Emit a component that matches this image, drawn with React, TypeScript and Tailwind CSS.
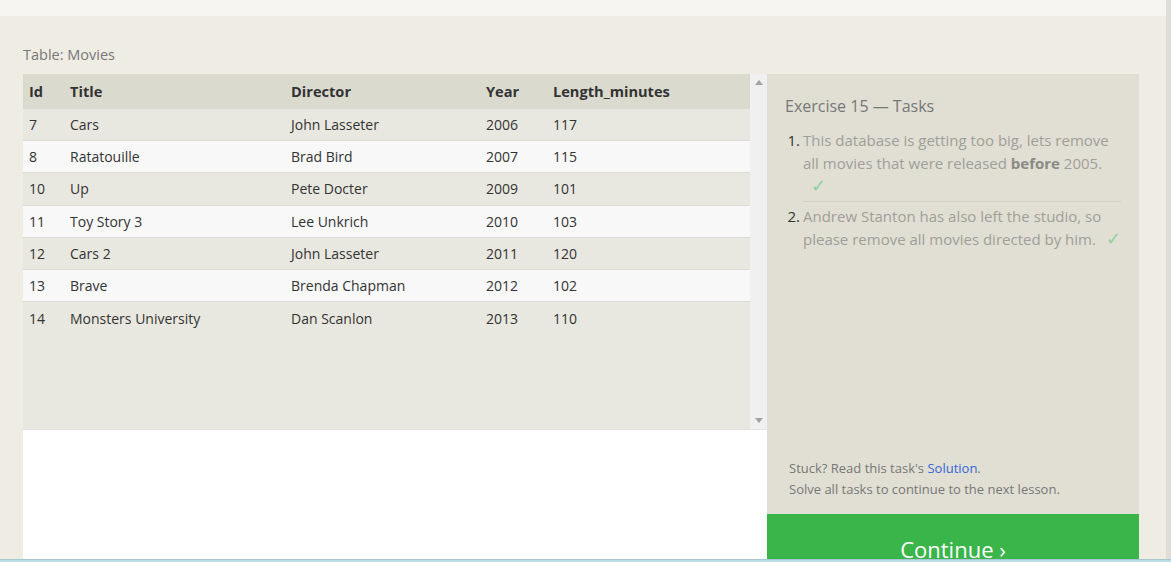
import React from "react";

const rows = [
  ["7", "Cars", "John Lasseter", "2006", "117"],
  ["8", "Ratatouille", "Brad Bird", "2007", "115"],
  ["10", "Up", "Pete Docter", "2009", "101"],
  ["11", "Toy Story 3", "Lee Unkrich", "2010", "103"],
  ["12", "Cars 2", "John Lasseter", "2011", "120"],
  ["13", "Brave", "Brenda Chapman", "2012", "102"],
  ["14", "Monsters University", "Dan Scanlon", "2013", "110"],
];

const cols = ["w-[41px]", "w-[221px]", "w-[195px]", "w-[67px]", "flex-1"];

export default function App() {
  return (
    <div className="w-[1171px] h-[562px] overflow-hidden flex flex-col bg-[#efece4] text-[#333]" style={{ fontFamily: '"Open Sans", sans-serif' }}>
      <div className="flex flex-1 min-h-0">
        <div className="flex-1 flex flex-col">
          <div className="h-[16px] bg-[#f6f5f1]"></div>
          <div className="pl-[23px] pr-[27px] flex flex-col flex-1 min-h-0">
            <div className="h-[58px] pt-[29px] text-[14.5px] leading-[20px] text-[#777]">Table: Movies</div>
            <div className="flex flex-1 min-h-0">
              <div className="w-[744px] flex flex-col bg-white">
                <div className="h-[355px] flex bg-[#e9e8e0]">
                  <div className="flex-1 flex flex-col">
                    <div className="h-[35px] flex items-center bg-[#dbdacf] font-bold text-[14.6px]">
                      {["Id", "Title", "Director", "Year", "Length_minutes"].map((h, i) => (
                        <div key={h} className={`${cols[i]} pl-[6px] pt-[1px]`}>{h}</div>
                      ))}
                    </div>
                    {rows.map((r, k) => (
                      <div key={k} className={`h-[32.2px] shrink-0 flex items-center text-[14px] border-b border-[#dcdbd5] ${k % 2 ? "bg-[#f8f8f8]" : "bg-[#e9e8e0]"} ${k == rows.length - 1 ? "border-b-0" : ""}`}>
                        {r.map((c, i) => (
                          <div key={i} className={`${cols[i]} pl-[6px]`}>{c}</div>
                        ))}
                      </div>
                    ))}
                  </div>
                  <div className="w-[17px] bg-[#f0f0f0] flex flex-col items-center justify-between py-[6px]">
                    <svg width="8" height="5" viewBox="0 0 8 5"><path d="M4 0L8 5H0Z" fill="#a3a3a3" /></svg>
                    <svg width="8" height="5" viewBox="0 0 8 5"><path d="M0 0H8L4 5Z" fill="#a3a3a3" /></svg>
                  </div>
                </div>
                <div className="flex-1 border-t border-[#e3e3e3]"></div>
              </div>
              <div className="w-[372px] flex flex-col bg-[#e1dfd4]">
                <div className="flex-1 px-[18px] pt-[20px]">
                  <div className="text-[16px] leading-[24px] text-[#777]">Exercise 15 — Tasks</div>
                  <ol className="mt-[11px] text-[15px] leading-[23px] text-[#a09e98]">
                    <li className="flex pb-[4px]">
                      <span className="w-[18px] shrink-0 text-[#333] text-right pr-[3px]">1.</span>
                      <div>
                        This database is getting too big, lets remove all movies that were released <b className="text-[#8a8984]">before</b> 2005.
                        <div className="pl-[8px] -mt-[1px] text-[18px] leading-[23px] text-[#8fd19e]">✓</div>
                      </div>
                    </li>
                    <li className="flex pt-[3px] ml-[18px] border-t border-[#d3d1c6]">
                      <span className="w-[18px] -ml-[18px] shrink-0 text-[#333] text-right pr-[3px]">2.</span>
                      <div>
                        Andrew Stanton has also left the studio, so please remove all movies directed by him. <span className="pl-[6px] text-[18px] leading-none text-[#8fd19e]">✓</span>
                      </div>
                    </li>
                  </ol>
                </div>
                <div className="px-[22px] pb-[14px] text-[13px] leading-[21px] text-[#777]">
                  <div>Stuck? Read this task's <span className="text-[#3465d9]">Solution</span>.</div>
                  <div>Solve all tasks to continue to the next lesson.</div>
                </div>
                <div className="h-[45px] bg-[#3ab54a] text-white text-[22px] text-center pt-[20px] leading-[30px] overflow-hidden">Continue ›</div>
              </div>
            </div>
          </div>
        </div>
        <div className="w-[5px] bg-[#e0ddd8]"></div>
      </div>
      <div className="h-[3px] bg-[#bcdde8] border-t border-[#a9c7d2]"></div>
    </div>
  );
}
